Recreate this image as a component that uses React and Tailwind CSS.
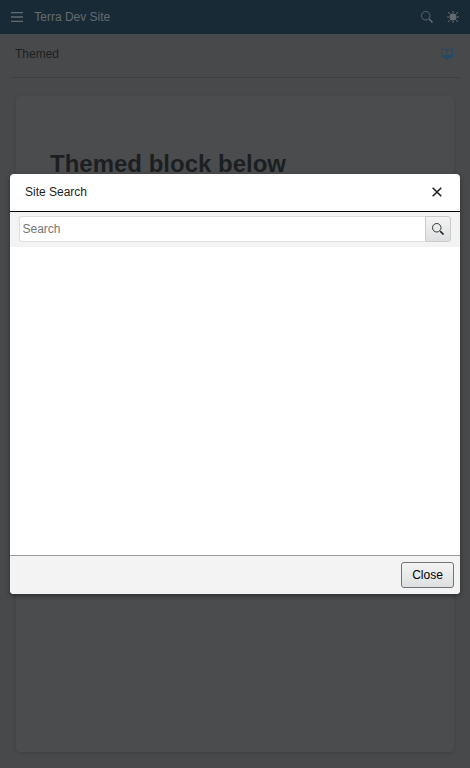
function MenuIcon() {
  return (
    <svg className="size-3 shrink-0" viewBox="0 0 12 12" fill="#646b70">
      <path d="M0 .9h12v1.4H0zM0 5.3h12v1.4H0zM0 9.7h12v1.4H0z" />
    </svg>
  );
}

function SearchIcon({ color }) {
  return (
    <svg className="size-3 shrink-0" viewBox="0 0 48 48" fill="none" stroke={color}>
      <circle cx="19" cy="19" r="17" strokeWidth="3.5" />
      <path d="M31 31l4 4" strokeWidth="4" />
      <path d="M35 35l9 9" strokeWidth="7" strokeLinecap="round" />
    </svg>
  );
}

function SunIcon() {
  return (
    <svg className="size-3 shrink-0" viewBox="0 0 48 48" fill="#646b70" stroke="#646b70" strokeWidth="4">
      <circle cx="24" cy="24" r="14" stroke="none" />
      <path d="M24 0v8M24 40v8M0 24h8M40 24h8M4 4l10 10M34 34l10 10M44 4L34 14M14 34L4 44" />
    </svg>
  );
}

function DisplayIcon() {
  return (
    <svg className="size-3 shrink-0" viewBox="0 0 48 48" fill="#1d4a66">
      <path d="M0 2h13v3H4v23h40V5h-9V2h13v36H0z" />
      <path d="M24 2l9 9h-7v13h-4V11h-7zM20 38h8v4h4v4H16v-4h4z" />
    </svg>
  );
}

function CloseIcon() {
  return (
    <svg className="size-3 shrink-0" viewBox="0 0 12 12" stroke="#1c1f21" strokeWidth="1.5">
      <path d="M1.7 1.7l8.6 8.6M10.3 1.7l-8.6 8.6" />
    </svg>
  );
}

function SearchDialog() {
  return (
    <div
      role="dialog"
      className="absolute inset-x-[10px] top-[174px] flex h-[420px] flex-col overflow-hidden rounded-[4px] bg-white text-[#1c1f21] shadow-[0_2px_5px_rgba(0,0,0,0.4)]"
    >
      <div className="flex h-[38px] shrink-0 items-center justify-between border-b border-black pr-[17px] pb-px pl-[15px]">
        <span>Site Search</span>
        <button aria-label="Close dialog">
          <CloseIcon />
        </button>
      </div>
      <div className="flex h-[35px] shrink-0 bg-[#f3f3f3] px-[9px] pt-1 pb-[5px]">
        <input
          placeholder="Search"
          className="min-w-0 flex-1 rounded-l-[3px] border border-r-0 border-[#dedfe0] bg-white pl-[2.5px] outline-none placeholder:text-[#757575]"
        />
        <button
          aria-label="Search"
          className="flex w-[26px] items-center justify-center rounded-r-[3px] border border-[#c8cacb] bg-linear-to-b from-[#f4f4f4] to-[#dedfe0]"
        >
          <SearchIcon color="#1c1f21" />
        </button>
      </div>
      <div className="flex-1" />
      <div className="flex h-[39px] shrink-0 items-start justify-end border-t border-[#9b9b9b] bg-[#f3f3f3] px-1.5 pt-1.5">
        <button className="h-[26px] w-[53px] rounded-[3px] border border-[#6f7477] bg-linear-to-b from-[#f4f4f4] to-[#dedfe0] text-black">
          Close
        </button>
      </div>
    </div>
  );
}

export default function App() {
  return (
    <div className="relative flex h-screen flex-col overflow-hidden bg-[#48494b] font-['Liberation_Sans',Arial,sans-serif] text-[12px] leading-[14px]">
      <header className="flex h-[34px] shrink-0 items-center bg-[#192a37] px-[11px] text-[#646b70]">
        <MenuIcon />
        <span className="ml-[11.25px] flex-1">Terra Dev Site</span>
        <SearchIcon color="#646b70" />
        <span className="w-[14px]" />
        <SunIcon />
      </header>
      <div className="mx-[10px] flex h-[44px] shrink-0 items-start justify-between border-b border-[#3d3f41] pt-[13px] pr-[7px] pl-[5px] text-[#1c1f21]">
        <span>Themed</span>
        <span className="pt-px">
          <DisplayIcon />
        </span>
      </div>
      <main className="mx-4 mt-[18px] mb-4 flex-1 rounded-[4px] bg-[#4b4c4e] px-[34px] pt-[54px] shadow-[0_1px_3px_rgba(0,0,0,0.15)]">
        <h1 className="text-[24px] leading-[28px] font-bold text-[#1c1f21]">Themed block below</h1>
      </main>
      <SearchDialog />
    </div>
  );
}
